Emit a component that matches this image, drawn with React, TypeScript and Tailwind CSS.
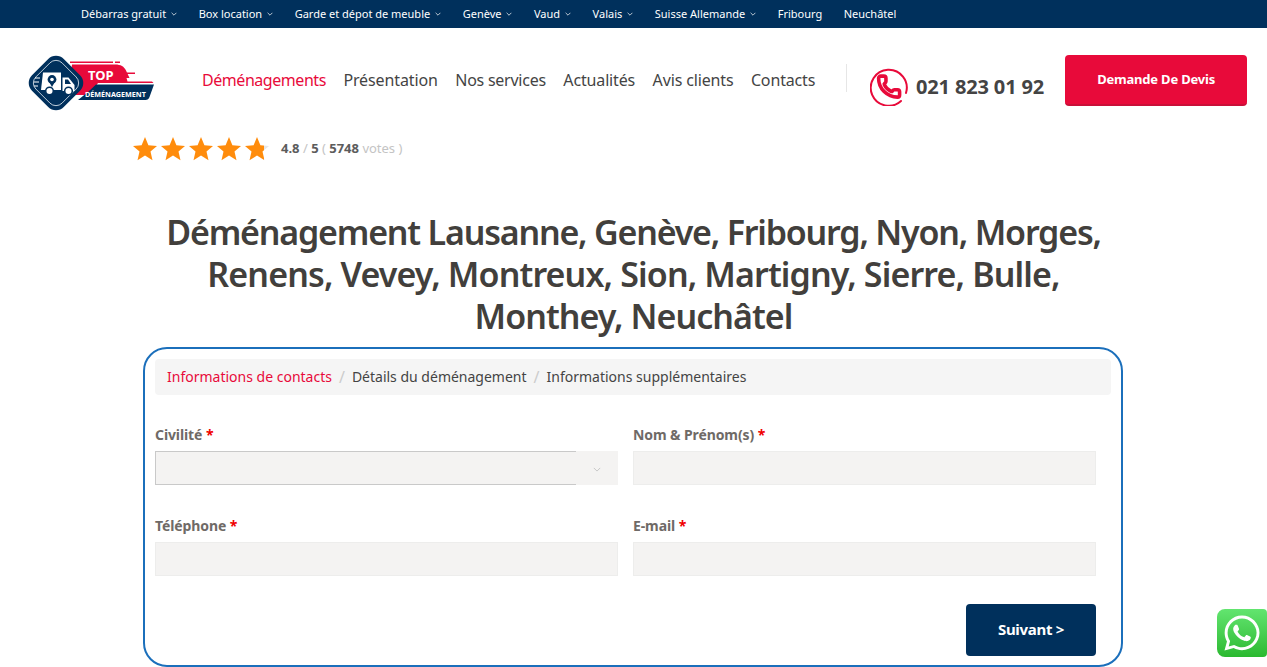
import { FaWhatsapp } from "react-icons/fa";

const font = { fontFamily: '"Noto Sans", sans-serif' };
const top = [
  ["Débarras gratuit", true],
  ["Box location", true],
  ["Garde et dépot de meuble", true],
  ["Genève", true],
  ["Vaud", true],
  ["Valais", true],
  ["Suisse Allemande", true],
  ["Fribourg", false],
  ["Neuchâtel", false],
] as const;
const nav = [
  ["Déménagements", "text-[#e80a3a] tracking-[-0.45px]"],
  ["Présentation", "tracking-[-0.12px]"],
  ["Nos services", "tracking-[-0.25px]"],
  ["Actualités", "tracking-[-0.15px]"],
  ["Avis clients", "tracking-[-0.15px]"],
  ["Contacts", "tracking-[-0.15px]"],
] as const;

function Chevron({ className }: { className?: string }) {
  return (
    <svg viewBox="0 0 10 6" className={className} fill="none" stroke="currentColor" strokeWidth="1.2">
      <path d="M1 1l4 4 4-4" />
    </svg>
  );
}

function Logo() {
  return (
    <svg viewBox="0 0 130 56" className="w-[130px] h-[56px] shrink-0">
      <path d="M42 6.500h43v1.600H42zM87 6.500h5v1.600h-5z" fill="#e80a3a" />
      <path d="M44 9.500h43c6 0 9 2 11 6l3.500 7.500h-3l1 3.500h24.500l1.500 1.600H70L61 40H40z" fill="#e80a3a" />
      <path d="M99 17.500h8v1.500h-8z" fill="#e80a3a" />
      <path d="M68 29.500h58l-4.500 12.500c-.6 2-2 3-4 3H50L60 37z" fill="#00305c" />
      <rect x="5.500" y="5.500" width="45" height="45" rx="11" transform="rotate(45 28 28)" fill="#00305c" />
      <rect x="9.500" y="9.500" width="37" height="37" rx="8.500" transform="rotate(45 28 28)" fill="none" stroke="#dfe7ee" strokeWidth="0.8" />
      <path d="M15 17.500h18v17.500H13z" fill="#fff" />
      <path d="M34.500 22.500h6l6 7.500v6H34.500z" fill="#fff" />
      <path d="M37 24.500h3l3 4.500h-6z" fill="#00305c" />
      <path d="M7 23h5M6 27h5M6 31h4" stroke="#fff" strokeWidth="1" />
      <circle cx="24" cy="24.500" r="4.400" fill="#00305c" />
      <path d="M21.500 27.500L24 32l2.500-4.500z" fill="#00305c" />
      <circle cx="24" cy="24.500" r="1.800" fill="#fff" />
      <circle cx="21.500" cy="36" r="3.800" fill="#fff" stroke="#00305c" strokeWidth="1.500" />
      <circle cx="40.500" cy="36" r="3.800" fill="#fff" stroke="#00305c" strokeWidth="1.500" />
      <text x="60" y="25" fill="#fff" fontSize="13" fontWeight="700" style={font}>TOP</text>
      <text x="57" y="41.500" fill="#fff" fontSize="7.200" fontWeight="700" style={font}>DÉMÉNAGEMENT</text>
    </svg>
  );
}

const starPath = "M12 0l3.400 8.200 8.600.7-6.500 5.700 2 8.600L12 18.600l-7.500 4.600 2-8.600L0 8.900l8.600-.7z";

function Star({ id, pct }: { id: string; pct: number }) {
  return (
    <svg viewBox="0 0 24 24" className="w-6 h-6">
      <defs>
        <linearGradient id={id}>
          <stop offset={`${pct}%`} stopColor="#ff8c0c" />
          <stop offset={`${pct}%`} stopColor="#e6e6e6" />
        </linearGradient>
      </defs>
      <path d={starPath} fill={`url(#${id})`} />
    </svg>
  );
}

function PhoneIcon() {
  return (
    <svg viewBox="0 0 38 38" className="w-[38px] h-[38px] shrink-0" fill="none" stroke="#e80a3a">
      <path d="M31 33A18 18 0 1 1 36 25" strokeWidth="2" strokeLinecap="round" />
      <g transform="translate(6.500 6) scale(1.05)">
        <path
          strokeWidth="3.400"
          d="M13.832 16.568a1 1 0 0 0 1.213-.303l.355-.465A2 2 0 0 1 17 15h3a2 2 0 0 1 2 2v3a2 2 0 0 1-2 2A18 18 0 0 1 2 4a2 2 0 0 1 2-2h3a2 2 0 0 1 2 2v3a2 2 0 0 1-.8 1.600l-.468.351a1 1 0 0 0-.292 1.233 14 14 0 0 0 6.392 6.384"
        />
      </g>
    </svg>
  );
}

function Label({ text }: { text: string }) {
  return (
    <div className="h-[16px] leading-[16px] text-[14px] tracking-[-0.1px] font-bold text-[#6f6a66] mb-[8px]">
      {text} <span className="text-[#f00000]">*</span>
    </div>
  );
}

function Input() {
  return <div className="h-[34px] bg-[#f4f3f2] border border-[#ededec]" />;
}

export default function App() {
  return (
    <div className="relative h-[667px] w-full overflow-hidden bg-white" style={font}>
      <div className="h-[28px] bg-[#00305c] pl-[81px] flex items-center gap-[21.500px] text-[11px] text-white">
        {top.map(([t, c]) => (
          <div key={t} className="flex items-center gap-[5px]">
            <span>{t}</span>
            {c && <Chevron className="w-[6px] h-[4px]" />}
          </div>
        ))}
      </div>

      <div className="flex items-start h-[105px] pl-[28px]">
        <div className="mt-[27px]"><Logo /></div>
        <nav className="flex gap-[17.500px] ml-[44px] mt-[41px] w-[614px] text-[16px] leading-[22px] text-[#444]">
          {nav.map(([n, c]) => (
            <span key={n} className={`whitespace-nowrap ${c}`}>{n}</span>
          ))}
        </nav>
        <div className="w-px h-[28px] bg-[#e6e6e6] ml-[30px] mt-[36px]" />
        <div className="flex items-center gap-[8px] ml-[23px] mt-[40px]">
          <PhoneIcon />
          <span className="text-[20px] tracking-[-0.15px] font-bold text-[#444]">021 823 01 92</span>
        </div>
        <div className="ml-[21px] mt-[27px] w-[182px] h-[51px] rounded-[4px] bg-[#e80a3a] border-b-2 border-[#c90f38] flex items-center justify-center text-[13px] tracking-[-0.2px] font-bold text-white">
          Demande De Devis
        </div>
      </div>

      <div className="flex items-center pl-[133px] mt-[4px] h-[24px]">
        <div className="flex gap-[4px]">
          {[100, 100, 100, 100, 80].map((p, i) => (
            <Star key={i} id={`s${i}`} pct={p} />
          ))}
        </div>
        <div className="ml-[12px] text-[13px] leading-[18px] text-[#c4c4c4] -mt-[3px]">
          <b className="text-[#5c5c5c]">4.8</b> / <b className="text-[#5c5c5c]">5</b> ( <b className="text-[#5c5c5c]">5748</b> votes )
        </div>
      </div>

      <h1 className="mx-auto w-[980px] mt-[50px] text-center text-[34px] leading-[42px] font-semibold text-[#423f3c]">
        <span className="block tracking-[-1.2px]">Déménagement Lausanne, Genève, Fribourg, Nyon, Morges,</span>
        <span className="block tracking-[-0.87px]">Renens, Vevey, Montreux, Sion, Martigny, Sierre, Bulle,</span>
        <span className="block tracking-[-0.95px]">Monthey, Neuchâtel</span>
      </h1>

      <div className="ml-[143px] mt-[10px] w-[980px] h-[320px] rounded-[24px] border-2 border-[#1b6fbb] px-[10px] pt-[10px]">
        <div className="w-[956px] h-[36px] rounded-[4px] bg-[#f5f5f5] pl-[12px] flex items-center text-[14px] leading-[20px] text-[#444]">
          <span className="text-[#e80a3a]">Informations de contacts</span>
          <span className="mx-[7px] text-[#ccc] text-[16px]">/</span>
          <span>Détails du déménagement</span>
          <span className="mx-[7px] text-[#ccc] text-[16px]">/</span>
          <span>Informations supplémentaires</span>
        </div>

        <div className="grid grid-cols-[463px_463px] gap-x-[15px] gap-y-[33px] mt-[32px]">
          <div>
            <Label text="Civilité" />
            <div className="flex h-[34px] bg-[#f4f3f2]">
              <div className="w-[421px] border border-r-0 border-[#c9c9c9]" />
              <div className="flex-1 flex items-center justify-center text-[#c4c4c4]">
                <Chevron className="w-[8px] h-[5px] mt-[3px]" />
              </div>
            </div>
          </div>
          <div><Label text="Nom & Prénom(s)" /><Input /></div>
          <div><Label text="Téléphone" /><Input /></div>
          <div><Label text="E-mail" /><Input /></div>
        </div>

        <div className="w-[941px] flex justify-end mt-[28px]">
          <div className="w-[130px] h-[52px] rounded-[4px] bg-[#00305c] flex items-center justify-center text-[15px] tracking-[-0.3px] font-bold text-white pb-[2px]">
            Suivant &gt;
          </div>
        </div>
      </div>

      <div className="absolute left-[1217px] top-[609px] w-[50px] h-[48px] rounded-l-[8px] rounded-r-[4px] bg-gradient-to-b from-[#62e56f] to-[#2ab92f] flex items-center justify-center text-white">
        <FaWhatsapp className="w-[40px] h-[40px]" />
      </div>
    </div>
  );
}
